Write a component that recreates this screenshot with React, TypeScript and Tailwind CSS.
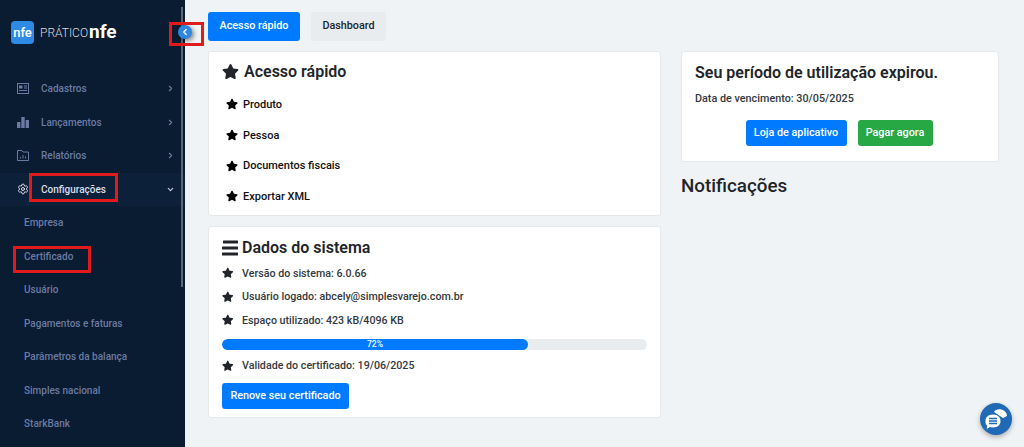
import { ChevronDown, ChevronLeft, ChevronRight, Settings } from "lucide-react";
import { FaStar } from "react-icons/fa";
import type { ReactNode } from "react";

const mainMenu: { label: string; icon: ReactNode }[] = [
  {
    label: "Cadastros",
    icon: (
      <svg width="12" height="11" viewBox="0 0 12 11" fill="none" stroke="#6b7aa3">
        <rect x="0.5" y="0.5" width="11" height="10" />
        <rect x="2" y="2.5" width="3.5" height="3" fill="#6b7aa3" stroke="none" />
        <path d="M7 3h3M7 5h3M2 7.5h8" />
      </svg>
    ),
  },
  {
    label: "Lançamentos",
    icon: (
      <svg width="12" height="11" viewBox="0 0 12 11" fill="#6b7aa3">
        <rect x="0" y="5" width="3.4" height="6" />
        <rect x="4.3" y="0" width="3.4" height="11" />
        <rect x="8.6" y="3" width="3.4" height="8" />
      </svg>
    ),
  },
  {
    label: "Relatórios",
    icon: (
      <svg width="12" height="11" viewBox="0 0 12 11" fill="none" stroke="#6b7aa3">
        <path d="M0.5 10.5V0.5H5l1 1.5h5.5v8.500z" />
        <path d="M3.500 8.500V7M6 8.500V5M8.500 8.500V6.500" />
      </svg>
    ),
  },
];

const subMenu = ["Empresa", "Certificado", "Usuário", "Pagamentos e faturas", "Parâmetros da balança", "Simples nacional", "StarkBank"];
const quickLinks = ["Produto", "Pessoa", "Documentos fiscais", "Exportar XML"];

function Sidebar() {
  return (
    <aside className="relative w-[185px] h-[447px] shrink-0 bg-[#0a1c31] overflow-hidden">
      <div className="flex items-center h-[64px] pl-[11px] pt-[1px]">
        <div className="w-[23px] h-[23px] rounded-[4px] bg-[#2f8ae6] flex items-center justify-center text-white text-[13px] font-medium leading-none">
          nfe
        </div>
        <span className="ml-[6px] text-[#d5d9e0] text-[12px] font-light leading-none">PRÁTICO</span>
        <span className="ml-[1px] text-white text-[19px] font-bold leading-none -mt-[3px]">nfe</span>
      </div>
      <nav className="mt-[8px]">
        {mainMenu.map((item) => (
          <div key={item.label} className="flex items-center h-[33.5px] pl-[17px] pr-[10px]">
            <span className="w-[12px] flex justify-center">{item.icon}</span>
            <span className="ml-[12px] flex-1 text-[10px] font-medium text-[#6b7aa3]">{item.label}</span>
            <ChevronRight size={9} strokeWidth={3} className="text-[#6b7aa3]" />
          </div>
        ))}
        <div className="flex items-center h-[33.5px] pl-[17px] pr-[10px] bg-[#0d2039]">
          <Settings size={12} className="text-[#d8dce6]" />
          <span className="ml-[12px] flex-1 text-[10px] font-medium text-[#d8dce6]">Configurações</span>
          <ChevronDown size={9} strokeWidth={3} className="text-[#c8cedb]" />
        </div>
        {subMenu.map((label) => (
          <div key={label} className="flex items-center h-[33.5px] pl-[24px] text-[10px] font-medium text-[#6b7aa3]">
            {label}
          </div>
        ))}
      </nav>
      <div className="absolute top-[7px] right-[2px] w-[2px] h-[280px] bg-[#5b6675]" />
    </aside>
  );
}

function Star({ size = 12, color = "#000", className = "" }: { size?: number; color?: string; className?: string }) {
  return <FaStar size={size} color={color} className={`shrink-0 ${className}`} />;
}

function Card({ children, className }: { children: ReactNode; className: string }) {
  return <div className={`bg-white rounded-[3px] border border-[#e6e9ec] ${className}`}>{children}</div>;
}

function InfoRow({ children }: { children: ReactNode }) {
  return (
    <div className="flex items-center h-[23.5px] text-[10.7px] font-medium text-[#343a40]">
      <Star size={11.5} color="#212529" className="mb-[2px]" />
      <span className="ml-[8.5px]">{children}</span>
    </div>
  );
}

export default function App() {
  return (
    <div className="relative flex w-[1024px] h-[447px] overflow-hidden bg-[#f0f3f5] font-['Roboto',sans-serif]">
      <Sidebar />

      <main className="flex-1 pl-[23px] pt-[12px]">
        <div className="flex gap-[11px]">
          <button className="h-[29px] w-[92px] rounded-[3px] bg-[#007bff] text-white text-[10.8px] font-medium">Acesso rápido</button>
          <button className="h-[29px] w-[75px] rounded-[3px] bg-[#e9ecef] text-[#212529] text-[10.8px] font-medium">Dashboard</button>
        </div>

        <div className="flex mt-[10px] gap-[20px]">
          <div className="w-[453px] flex flex-col gap-[10px]">
            <Card className="h-[165px] pl-[13px] pt-[9px]">
              <div className="flex items-center h-[21px]">
                <Star size={17} color="#212529" />
                <h2 className="ml-[5px] text-[16px] font-semibold text-[#212529]">Acesso rápido</h2>
              </div>
              <ul className="mt-[8px] pl-[4px]">
                {quickLinks.map((link) => (
                  <li key={link} className="flex items-center h-[30.7px] text-[11px] font-medium text-[#111]">
                    <Star size={12} className="mb-[2px]" />
                    <span className="ml-[5px]">{link}</span>
                  </li>
                ))}
              </ul>
            </Card>

            <Card className="h-[192px] px-[13px] pt-[11px]">
              <div className="flex items-center h-[20px]">
                <svg width="17" height="16" viewBox="0 0 17 16" fill="#212529" className="shrink-0">
                  <rect x="1" y="0.5" width="15" height="3" rx="0.5" />
                  <rect x="0" y="6.5" width="16" height="3" rx="0.5" />
                  <rect x="0" y="12.5" width="16" height="3" rx="0.5" />
                </svg>
                <h2 className="ml-[3px] text-[16px] font-semibold text-[#212529]">Dados do sistema</h2>
              </div>
              <div className="mt-[4px]">
                <InfoRow>Versão do sistema: 6.0.66</InfoRow>
                <InfoRow>Usuário logado: abcely@simplesvarejo.com.br</InfoRow>
                <InfoRow>Espaço utilizado: 423 kB/4096 KB</InfoRow>
              </div>
              <div className="mt-[6px] h-[11px] rounded-full bg-[#e9ecef] overflow-hidden">
                <div className="w-[72%] h-full rounded-full bg-[#007bff] flex items-center justify-center text-white text-[8.5px] font-medium">
                  72%
                </div>
              </div>
              <div className="mt-[5px]">
                <InfoRow>Validade do certificado: 19/06/2025</InfoRow>
              </div>
              <button className="mt-[5px] h-[26px] w-[127px] rounded-[3px] bg-[#007bff] text-white text-[10.8px] font-medium">
                Renove seu certificado
              </button>
            </Card>
          </div>

          <div className="w-[318px]">
            <Card className="h-[111px] pl-[13px] pt-[10px]">
              <h2 className="text-[16px] leading-[22px] font-semibold text-[#212529]">Seu período de utilização expirou.</h2>
              <p className="mt-[7px] text-[10.8px] font-medium text-[#343a40]">Data de vencimento: 30/05/2025</p>
              <div className="flex justify-center gap-[11px] mt-[13px] pr-[15px]">
                <button className="h-[26px] w-[101px] rounded-[3px] bg-[#007bff] text-white text-[10.8px] font-medium">Loja de aplicativo</button>
                <button className="h-[26px] w-[75px] rounded-[3px] bg-[#28a745] text-white text-[10.8px] font-medium">Pagar agora</button>
              </div>
            </Card>
            <h2 className="mt-[12px] text-[18.8px] leading-[25px] font-medium text-[#212529]">Notificações</h2>
          </div>
        </div>
      </main>

      {/* sidebar toggle */}
      <button className="absolute left-[178px] top-[25px] w-[14px] h-[14px] rounded-full bg-[#2f86e0] flex items-center justify-center shadow-[2px_2px_4px_rgba(0,0,0,0.45)]">
        <ChevronLeft size={10} strokeWidth={3} className="text-white" />
      </button>

      {/* red annotations */}
      <div className="absolute left-[169px] top-[22px] w-[35px] h-[24px] border-[3px] border-[#e01b1b]" />
      <div className="absolute left-[29px] top-[173px] w-[89px] h-[29px] border-[3px] border-[#e01b1b]" />
      <div className="absolute left-[13px] top-[246px] w-[78px] h-[27px] border-[3px] border-[#e01b1b]" />

      {/* chat bubble */}
      <button className="absolute left-[980px] top-[403px] w-[32px] h-[32px] rounded-full bg-[#1f69b5] shadow-[0_2px_5px_rgba(0,0,0,0.3)]">
        <svg width="32" height="32" viewBox="0 0 32 32" className="block">
          <path d="M14 9c1-2 4-3 7-2.500 3.500.6 5.800 3 6 6.500l-4 2z" fill="#fff" />
          <path d="M13 11c4.700 0 8 2.900 8 7s-3.300 7-8 7c-1.100 0-2-.1-3-.4L6 27l.7-4.300C5.300 21.400 5 19.800 5 18c0-4.100 3.300-7 8-7z" fill="#fff" stroke="#1f69b5" strokeWidth="1" />
          <path d="M9 15.500h8M9 18h8M9 20.500h8" stroke="#1f69b5" strokeWidth="1.300" />
        </svg>
      </button>
    </div>
  );
}
